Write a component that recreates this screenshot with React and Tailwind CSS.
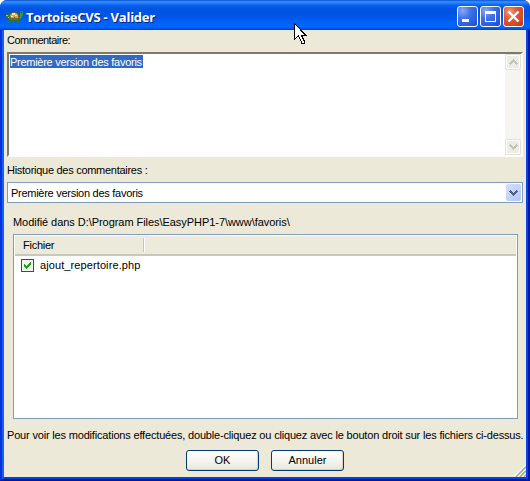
function Turtle() {
  return (
    <svg width="18" height="14" viewBox="0 0 18 14" className="shrink-0">
      <path d="M1 4h4l2 2v2H3L1 7z" fill="#3f7a28" />
      <path d="M1 5h2v1H1zM3 7h2v1H3z" fill="#b4c060" />
      <path d="M12 8l3-1V3l1-2h2v3l-1 3-3 3z" fill="#3f9b35" />
      <path d="M15 1h3v2h-3z" fill="#2d8b38" />
      <path d="M16 2h1v1h-1z" fill="#0a3cc0" />
      <path d="M3 8h12l-1 2v3h-2v-2H7l-2 2H3l1-3z" fill="#2a7a22" />
      <path d="M4 8l1-4 3-2h3l3 3v4l-3 1H6z" fill="#756628" />
      <path d="M5 5l3-2h3l2 2v3H6z" fill="#c0aa62" />
      <path d="M7 3h3v2H7zM6 6h2v1H6zM10 5h2v1h-2z" fill="#f0e4b0" />
      <path d="M9 7h1v1H9z" fill="#6b5a20" />
    </svg>
  );
}

function TitleButton({ kind }) {
  const color =
    kind === "close"
      ? "bg-[radial-gradient(circle_at_30%_25%,#f0a080_0%,#e05a38_35%,#d9431e_75%,#b83210_100%)]"
      : "bg-[radial-gradient(circle_at_25%_20%,#86a9f5_0%,#3c70e8_40%,#285be0_75%,#1d46c0_100%)]";
  return (
    <div className={"h-[21px] w-[21px] rounded-[3px] border border-white " + color}>
      <svg width="19" height="19" viewBox="0 0 19 19" shapeRendering="crispEdges">
        {kind === "min" && <path d="M4 12h7v3H4z" fill="#fff" />}
        {kind === "max" && <path d="M4 4h11v11H4zM5 7v7h9V7z" fill="#fff" fillRule="evenodd" />}
        {kind === "close" && <path d="M4.500 4.500l10 10M14.500 4.500l-10 10" stroke="#fff" strokeWidth="2.4" shapeRendering="auto" />}
      </svg>
    </div>
  );
}

function Chevron({ up, color }) {
  return (
    <svg width="9" height="6" viewBox="0 0 9 6" shapeRendering="crispEdges" className={up ? "rotate-180" : ""}>
      <path d="M0 1h1V0h1v1h1v1h1v1h1V2h1V1h1V0h1v1h1v1H8v1H7v1H6v1H5v1H4V5H3V4H2V3H1V2H0z" fill={color} />
    </svg>
  );
}

function ScrollButton({ up }) {
  return (
    <div className="flex h-4 w-4 items-center justify-center rounded-[2px] border border-[#e4e2d6] bg-[#eeede5] shadow-[inset_0_0_0_1px_#fff]">
      <Chevron up={up} color="#c5c3b8" />
    </div>
  );
}

function Button({ children }) {
  return (
    <button className="flex h-[21px] w-[73px] items-center justify-center rounded-[3px] border border-[#003c74] bg-linear-to-b from-white via-[#f5f4ef] to-[#e9e6dd] leading-[19px] shadow-[inset_-1px_-1px_0_#d6d0c5]">
      {children}
    </button>
  );
}

export default function App() {
  return (
    <div className="relative h-[481px] w-[530px] bg-white font-['Liberation_Sans',Arial,sans-serif] text-[11px] leading-[14px] whitespace-nowrap text-black">
      <div className="flex h-full w-full flex-col overflow-hidden rounded-t-[7px] bg-[#0831d9]">
        <div className="flex h-[30px] shrink-0 items-center bg-[linear-gradient(to_bottom,#0750cf_0%,#3c8fff_6%,#2480fc_10%,#0860ec_18%,#0054e3_30%,#0055e5_55%,#0062fb_75%,#0066ff_88%,#005bf0_94%,#0041bd_100%)] pt-[3px] pr-[6px] pl-[5px]">
          <Turtle />
          <span className="ml-[3px] font-['Open_Sans',sans-serif] text-[13px] leading-[16px] font-bold tracking-[-0.25px] text-white [text-shadow:1px_1px_0_#0a1f7c]">TortoiseCVS - Valider</span>
          <div className="ml-auto flex gap-[2px]">
            <TitleButton kind="min" />
            <TitleButton kind="max" />
            <TitleButton kind="close" />
          </div>
        </div>
        <div className="flex min-h-0 flex-1 border-x-2 border-b-2 border-r-[#0019a8] border-b-[#001590] border-l-[#0831d9]">
          <div className="flex flex-1 flex-col border-x-2 border-b-2 border-r-[#0046e8] border-b-[#0440e4] border-l-[#1460f4] bg-[#ece9d8] px-[3px] pt-[3px]">
            <div className="h-[19px]"><span className="tracking-[-0.5px]">Commentaire:</span></div>
            <div className="flex h-[105px] w-[516px] justify-between border-2 border-t-[#7c7a6e] border-r-white border-b-white border-l-[#7c7a6e] bg-white">
              <div className="pt-px pl-px"><span className="block h-[13px] w-[133px] bg-[#316ac5] leading-[14px] tracking-[-0.27px] text-white">Première version des favoris</span></div>
              <div className="flex w-4 flex-col justify-between bg-[#f5f4ee]">
                <ScrollButton up />
                <ScrollButton />
              </div>
            </div>
            <div className="mt-[6px] h-[19px]"><span className="tracking-[-0.28px]">Historique des commentaires :</span></div>
            <div className="flex h-[21px] w-[516px] items-center justify-between border border-[#7f9db9] bg-white pr-px pl-[3px]">
              <span className="tracking-[-0.27px]">Première version des favoris</span>
              <div className="flex h-[17px] w-[15px] items-center justify-center rounded-[2px] bg-linear-to-br from-[#d2dffe] to-[#b4c8f6]">
                <Chevron color="#4d6185" />
              </div>
            </div>
            <div className="mt-[12px] h-[19px] pl-[6px]"><span className="tracking-[-0.05px]">Modifié dans D:\Program Files\EasyPHP1-7\www\favoris\</span></div>
            <div className="ml-[6px] h-[185px] w-[505px] border border-[#7f9db9] bg-white p-px">
              <div className="flex h-[20px] items-center border-b-2 border-[#cbc7b8] bg-[#ebeadb] pl-2">
                <span className="tracking-[-0.25px]">Fichier</span>
                <div className="mr-[371px] ml-auto h-[14px] w-[2px] border-r border-l border-r-white border-l-[#c7c5b2]" />
              </div>
              <div className="flex h-[18px] items-center pl-[6px]">
                <div className="flex h-[13px] w-[13px] items-center justify-center border border-[#1c5180] bg-[#f4f4f0]">
                  <svg width="7" height="7" viewBox="0 0 7 7" shapeRendering="crispEdges"><path d="M0 2h1v1h1v1h1V3h1V2h1V1h1V0h1v3H6v1H5v1H4v1H3v1H2V6H1V5H0z" fill="#21a121" /></svg>
                </div>
                <span className="ml-[6px] tracking-[0.1px]">ajout_repertoire.php</span>
              </div>
            </div>
            <div className="mt-[9px] h-[22px]"><span className="tracking-[-0.177px]">Pour voir les modifications effectuées, double-cliquez ou cliquez avec le bouton droit sur les fichiers ci-dessus.</span></div>
            <div className="flex gap-[12px] pl-[179px]">
              <Button>OK</Button>
              <Button>Annuler</Button>
            </div>
          </div>
        </div>
      </div>
      <svg className="absolute right-[4px] bottom-[4px]" width="12" height="12" viewBox="0 0 12 12">
        <path d="M0 12L12 0M4 12l8-8M8 12l4-4" stroke="#fff" strokeWidth="1.5" />
        <path d="M1.800 12L12 1.800M5.800 12L12 5.800M9.800 12L12 9.800" stroke="#aaa794" strokeWidth="1.600" />
      </svg>
      <svg className="absolute top-[23px] left-[294px]" width="13" height="22" viewBox="0 0 13 22" shapeRendering="crispEdges">
        <path d="M.5.5v16l4-4 3.500 8h2.500v-2l-3-6h4.500z" fill="#fff" stroke="#000" />
      </svg>
    </div>
  );
}
